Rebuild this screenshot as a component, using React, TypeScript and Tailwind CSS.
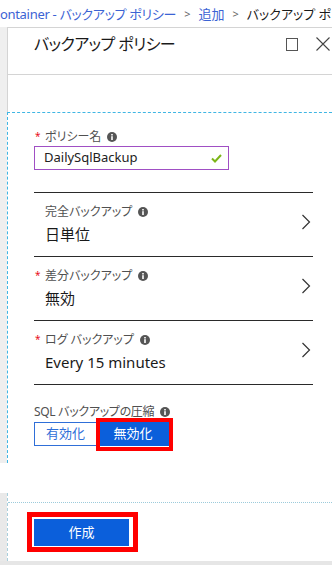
import React from "react";

const Info = () => (
  <svg width="10" height="10" viewBox="0 0 10 10" className="inline-block shrink-0">
    <circle cx="5" cy="5" r="5" fill="#555555" />
    <rect x="4.2" y="4.2" width="1.6" height="3.8" fill="#ffffff" />
    <rect x="4.2" y="2" width="1.6" height="1.5" fill="#ffffff" />
  </svg>
);

const Chevron = () => (
  <svg width="10" height="16" viewBox="0 0 10 16" className="shrink-0">
    <path d="M1.5 1 L8.5 8 L1.5 15" fill="none" stroke="#333333" strokeWidth="1.2" />
  </svg>
);

const Label = ({ text, required = true }: { text: string; required?: boolean }) => (
  <div className="flex items-center h-[16px] text-[12px] leading-[16px] text-[#505050]">
    <span className="w-[11px] text-[#e81123] text-[10px] leading-[10px] pl-[1px] -mt-[3px]">{required ? "*" : ""}</span>
    <span>{text}</span>
    <span className="ml-[6px] flex items-center"><Info /></span>
  </div>
);

const SelectRow = ({ label, value, required }: { label: string; value: string; required?: boolean }) => (
  <div className="w-[279px] h-[64px] border-b border-[#2a2a2a] pt-[11px] flex justify-between items-start pr-[2px]">
    <div className="flex flex-col">
      <Label text={label} required={required} />
      <div className="mt-[3px] pl-[11px] h-[22px] text-[15px] leading-[22px] text-[#1a1a1a]">{value}</div>
    </div>
    <div className="mt-[10px]"><Chevron /></div>
  </div>
);

export default function App() {
  return (
    <div
      className="w-[332px] h-[565px] overflow-hidden bg-white flex flex-col [font-feature-settings:'palt']"
      style={{ fontFamily: "'Noto Sans', 'Noto Sans CJK JP', sans-serif" }}
    >
      {/* breadcrumb */}
      <div className="h-[27px] flex items-center whitespace-nowrap text-[13px] leading-[18px] overflow-hidden">
        <span className="-ml-[8px] text-[#3b63d4] tracking-[-0.3px]">Container - バックアップ ポリシー</span>
        <span className="mx-[8px] text-[#666666] text-[11px]">&gt;</span>
        <span className="text-[#3b63d4]">追加</span>
        <span className="mx-[8px] text-[#666666] text-[11px]">&gt;</span>
        <span className="text-[#1a1a1a]">バックアップ ポリシー</span>
      </div>

      {/* header */}
      <div className="flex h-[48px]">
        <div className="w-[7px] bg-[#efefef]" />
        <div className="flex-1 border-l border-t border-b border-[#d4d4d4] flex items-start justify-between">
          <div className="pl-[26px] pt-[2px] text-[16px] leading-[28px] tracking-[-0.6px] text-[#1a1a1a]">バックアップ ポリシー</div>
          <div className="flex items-center pt-[9px] pr-[2px]">
            <div className="w-[12px] h-[13px] border border-[#555555]" />
            <svg width="14" height="14" viewBox="0 0 14 14" className="ml-[18px]">
              <path d="M0.5 0.5 L13.5 13.5 M13.5 0.5 L0.5 13.5" stroke="#444444" strokeWidth="1.1" />
            </svg>
          </div>
        </div>
      </div>

      {/* gap */}
      <div className="flex h-[37px]">
        <div className="w-[7px] bg-[#efefef]" />
        <div className="flex-1 border-l border-[#d4d4d4]" />
      </div>

      {/* form */}
      <div className="flex h-[351px]">
        <div className="w-[7px] bg-[#efefef]" />
        <div className="flex-1 border-l border-t border-dashed border-[#3fb6e4] pl-[26px] pt-[16px] flex flex-col">
          <Label text="ポリシー名" />
          <div className="mt-[1px] w-[195px] h-[24px] border border-[#a04fc4] flex items-center justify-between pl-[9px] pr-[6px]">
            <span className="text-[13px] text-[#222222]">DailySqlBackup</span>
            <svg width="11" height="9" viewBox="0 0 11 9">
              <path d="M1 4.5 L4 7.5 L10 1" fill="none" stroke="#7cb518" strokeWidth="2" />
            </svg>
          </div>
          <div className="w-[279px] h-[23px] border-b border-[#2a2a2a]" />
          <SelectRow label="完全バックアップ" value="日単位" required={false} />
          <SelectRow label="差分バックアップ" value="無効" />
          <SelectRow label="ログ バックアップ" value="Every 15 minutes" />
          <div className="mt-[19px] flex items-center h-[16px] text-[12px] leading-[16px] tracking-[-0.3px] text-[#505050]">
            <span>SQL バックアップの圧縮</span>
            <span className="ml-[6px] flex items-center"><Info /></span>
          </div>
          <div className="mt-[2px] flex relative">
            <div className="w-[63px] h-[24px] border border-[#2f6fd8] text-[#2f6fd8] text-[13px] flex items-center justify-center">有効化</div>
            <div className="w-[72px] h-[24px] bg-[#0b5fdb] text-white text-[13px] flex items-center justify-center">無効化</div>
            <div className="absolute left-[62px] top-[-4px] w-[77px] h-[33px] border-4 border-[#ff0000]" />
          </div>
        </div>
      </div>

      {/* gap */}
      <div className="h-[30px]" />

      {/* footer */}
      <div className="flex h-[68px]">
        <div className="w-[7px] bg-[#e9e9e9]" />
        <div className="flex-1 border-l border-dashed border-[#a9cfdc] flex flex-col">
          <div className="h-[9px]" />
          <div className="flex-1 border-t border-dotted border-[#9ccbdb] pl-[19px] pt-[9px]">
            <div className="w-[111px] h-[40px] border-[5px] border-[#ff0000] p-[2px] pr-[4px] pb-[2px]">
              <div className="w-[95px] h-[27px] bg-[#0b5fdb] text-white text-[13px] flex items-center justify-center">作成</div>
            </div>
          </div>
        </div>
      </div>

      {/* bottom bar */}
      <div className="flex-1 bg-[#e6e6e6]" />
    </div>
  );
}
